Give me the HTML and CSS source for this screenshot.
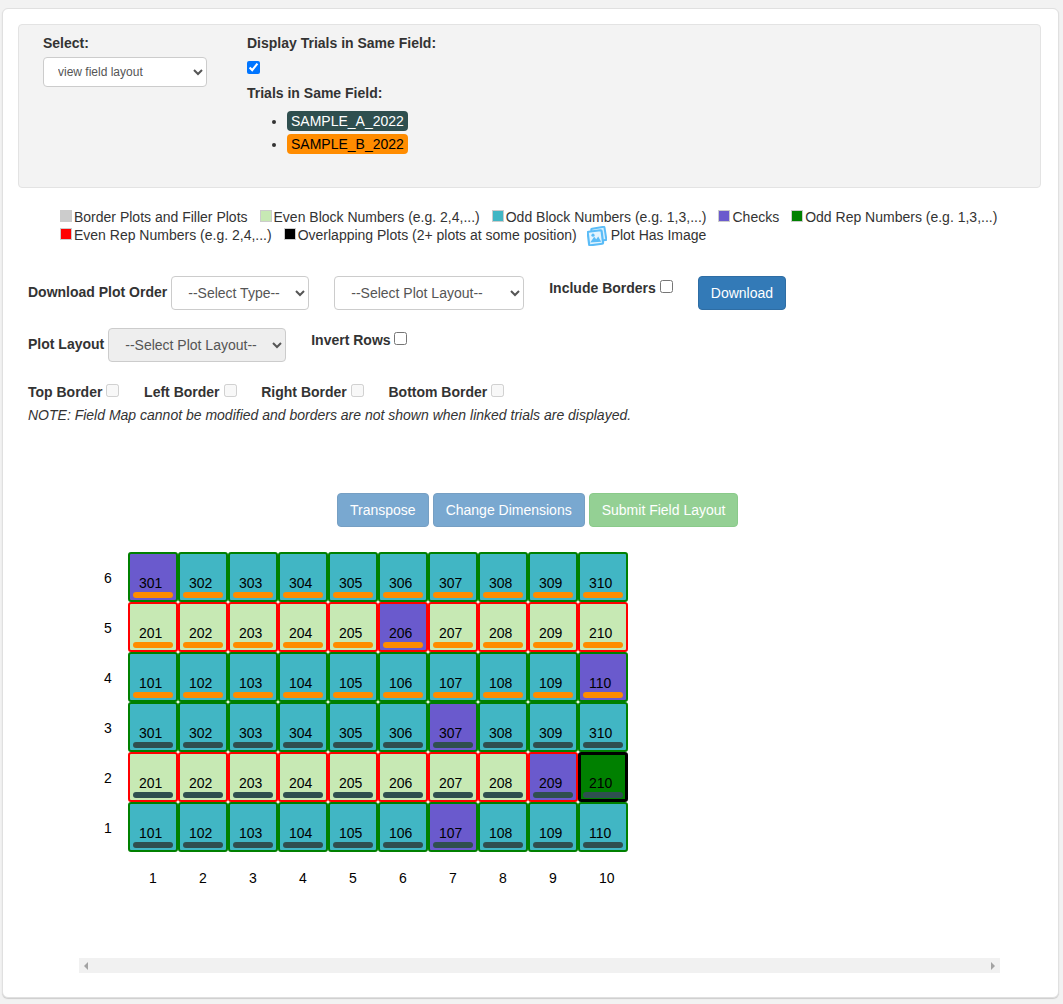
FILE: index.html
```html
<!DOCTYPE html>
<html lang="en">
<head>
    <meta charset="UTF-8">
    <title>Field Layout</title>
    <link rel="stylesheet" href="styles.css">
</head>
<body>
    <div class="card">
        <div class="well">
            <div class="well-select">
                <label class="label">Select:</label>
                <select class="small-select">
                    <option>view field layout</option>
                </select>
            </div>
            <div class="well-linked">
                <label class="label">Display Trials in Same Field:</label>
                <input type="checkbox" class="linked-check" checked>
                <label class="label">Trials in Same Field:</label>
                <ul class="trial-list">
                    <li><span class="trial-tag tag-a">SAMPLE_A_2022</span></li>
                    <li><span class="trial-tag tag-b">SAMPLE_B_2022</span></li>
                </ul>
            </div>
        </div>

        <div class="legend">
            <span class="legend-item"><i class="swatch sw-border"></i>Border Plots and Filler Plots</span>
            <span class="legend-item"><i class="swatch sw-even"></i>Even Block Numbers (e.g. 2,4,...)</span>
            <span class="legend-item"><i class="swatch sw-odd"></i>Odd Block Numbers (e.g. 1,3,...)</span>
            <span class="legend-item"><i class="swatch sw-check"></i>Checks</span>
            <span class="legend-item"><i class="swatch sw-oddrep"></i>Odd Rep Numbers (e.g. 1,3,...)</span>
            <span class="legend-item"><i class="swatch sw-evenrep"></i>Even Rep Numbers (e.g. 2,4,...)</span>
            <span class="legend-item"><i class="swatch sw-overlap"></i>Overlapping Plots (2+ plots at some position)</span>
            <span class="legend-item legend-image">
                <svg class="image-icon" viewBox="0 0 20 20" width="20" height="20">
                    <rect x="5" y="1.8" width="13.4" height="13.4" rx="1" fill="#d9f0fe" stroke="#5bbcf7" stroke-width="2" transform="rotate(-9 11 8)"/>
                    <rect x="1.4" y="5" width="14" height="13.6" rx="1" fill="#e3f4fe" stroke="#5bbcf7" stroke-width="2.2" transform="rotate(-7 8 12)"/>
                    <circle cx="6" cy="9.2" r="1.6" fill="#5bbcf7"/>
                    <path d="M3.2 16.6 7.2 10.8l2 2.4 2-2.8 3 5.4z" fill="#5bbcf7"/>
                </svg>
                Plot Has Image
            </span>
        </div>

        <div class="control-row first-row">
            <div class="field">
                <label class="label label-mid">Download Plot Order</label>
                <select class="form-select"><option>--Select Type--</option></select>
            </div>
            <select class="form-select layout-select"><option>--Select Plot Layout--</option></select>
            <div class="field field-high">
                <label class="label">Include Borders</label>
                <input type="checkbox" class="check">
            </div>
            <button class="btn btn-blue">Download</button>
        </div>

        <div class="control-row second-row">
            <div class="field">
                <label class="label label-mid">Plot Layout</label>
                <select class="form-select" disabled><option>--Select Plot Layout--</option></select>
            </div>
            <div class="field field-high invert-field">
                <label class="label">Invert Rows</label>
                <input type="checkbox" class="check">
            </div>
        </div>

        <div class="control-row border-row">
            <div class="field"><label class="label">Top Border</label><input type="checkbox" class="check" disabled></div>
            <div class="field"><label class="label">Left Border</label><input type="checkbox" class="check" disabled></div>
            <div class="field"><label class="label">Right Border</label><input type="checkbox" class="check" disabled></div>
            <div class="field"><label class="label">Bottom Border</label><input type="checkbox" class="check" disabled></div>
        </div>
        <p class="note">NOTE: Field Map cannot be modified and borders are not shown when linked trials are displayed.</p>

        <div class="layout-actions">
            <button class="btn btn-blue faded">Transpose</button>
            <button class="btn btn-blue faded">Change Dimensions</button>
            <button class="btn btn-green faded">Submit Field Layout</button>
        </div>

        <div class="field-map">
            <span class="row-label">6</span>
            <div class="plot rep-odd purple"><span>301</span><b class="bar bar-b"></b></div>
            <div class="plot rep-odd teal"><span>302</span><b class="bar bar-b"></b></div>
            <div class="plot rep-odd teal"><span>303</span><b class="bar bar-b"></b></div>
            <div class="plot rep-odd teal"><span>304</span><b class="bar bar-b"></b></div>
            <div class="plot rep-odd teal"><span>305</span><b class="bar bar-b"></b></div>
            <div class="plot rep-odd teal"><span>306</span><b class="bar bar-b"></b></div>
            <div class="plot rep-odd teal"><span>307</span><b class="bar bar-b"></b></div>
            <div class="plot rep-odd teal"><span>308</span><b class="bar bar-b"></b></div>
            <div class="plot rep-odd teal"><span>309</span><b class="bar bar-b"></b></div>
            <div class="plot rep-odd teal"><span>310</span><b class="bar bar-b"></b></div>

            <span class="row-label">5</span>
            <div class="plot rep-even pale"><span>201</span><b class="bar bar-b"></b></div>
            <div class="plot rep-even pale"><span>202</span><b class="bar bar-b"></b></div>
            <div class="plot rep-even pale"><span>203</span><b class="bar bar-b"></b></div>
            <div class="plot rep-even pale"><span>204</span><b class="bar bar-b"></b></div>
            <div class="plot rep-even pale"><span>205</span><b class="bar bar-b"></b></div>
            <div class="plot rep-even purple"><span>206</span><b class="bar bar-b"></b></div>
            <div class="plot rep-even pale"><span>207</span><b class="bar bar-b"></b></div>
            <div class="plot rep-even pale"><span>208</span><b class="bar bar-b"></b></div>
            <div class="plot rep-even pale"><span>209</span><b class="bar bar-b"></b></div>
            <div class="plot rep-even pale"><span>210</span><b class="bar bar-b"></b></div>

            <span class="row-label">4</span>
            <div class="plot rep-odd teal"><span>101</span><b class="bar bar-b"></b></div>
            <div class="plot rep-odd teal"><span>102</span><b class="bar bar-b"></b></div>
            <div class="plot rep-odd teal"><span>103</span><b class="bar bar-b"></b></div>
            <div class="plot rep-odd teal"><span>104</span><b class="bar bar-b"></b></div>
            <div class="plot rep-odd teal"><span>105</span><b class="bar bar-b"></b></div>
            <div class="plot rep-odd teal"><span>106</span><b class="bar bar-b"></b></div>
            <div class="plot rep-odd teal"><span>107</span><b class="bar bar-b"></b></div>
            <div class="plot rep-odd teal"><span>108</span><b class="bar bar-b"></b></div>
            <div class="plot rep-odd teal"><span>109</span><b class="bar bar-b"></b></div>
            <div class="plot rep-odd purple"><span>110</span><b class="bar bar-b"></b></div>

            <span class="row-label">3</span>
            <div class="plot rep-odd teal"><span>301</span><b class="bar bar-a"></b></div>
            <div class="plot rep-odd teal"><span>302</span><b class="bar bar-a"></b></div>
            <div class="plot rep-odd teal"><span>303</span><b class="bar bar-a"></b></div>
            <div class="plot rep-odd teal"><span>304</span><b class="bar bar-a"></b></div>
            <div class="plot rep-odd teal"><span>305</span><b class="bar bar-a"></b></div>
            <div class="plot rep-odd teal"><span>306</span><b class="bar bar-a"></b></div>
            <div class="plot rep-odd purple"><span>307</span><b class="bar bar-a"></b></div>
            <div class="plot rep-odd teal"><span>308</span><b class="bar bar-a"></b></div>
            <div class="plot rep-odd teal"><span>309</span><b class="bar bar-a"></b></div>
            <div class="plot rep-odd teal"><span>310</span><b class="bar bar-a"></b></div>

            <span class="row-label">2</span>
            <div class="plot rep-even pale"><span>201</span><b class="bar bar-a"></b></div>
            <div class="plot rep-even pale"><span>202</span><b class="bar bar-a"></b></div>
            <div class="plot rep-even pale"><span>203</span><b class="bar bar-a"></b></div>
            <div class="plot rep-even pale"><span>204</span><b class="bar bar-a"></b></div>
            <div class="plot rep-even pale"><span>205</span><b class="bar bar-a"></b></div>
            <div class="plot rep-even pale"><span>206</span><b class="bar bar-a"></b></div>
            <div class="plot rep-even pale"><span>207</span><b class="bar bar-a"></b></div>
            <div class="plot rep-even pale"><span>208</span><b class="bar bar-a"></b></div>
            <div class="plot rep-even purple"><span>209</span><b class="bar bar-a"></b></div>
            <div class="plot overlap"><span>210</span><b class="bar bar-a"></b></div>

            <span class="row-label">1</span>
            <div class="plot rep-odd teal"><span>101</span><b class="bar bar-a"></b></div>
            <div class="plot rep-odd teal"><span>102</span><b class="bar bar-a"></b></div>
            <div class="plot rep-odd teal"><span>103</span><b class="bar bar-a"></b></div>
            <div class="plot rep-odd teal"><span>104</span><b class="bar bar-a"></b></div>
            <div class="plot rep-odd teal"><span>105</span><b class="bar bar-a"></b></div>
            <div class="plot rep-odd teal"><span>106</span><b class="bar bar-a"></b></div>
            <div class="plot rep-odd purple"><span>107</span><b class="bar bar-a"></b></div>
            <div class="plot rep-odd teal"><span>108</span><b class="bar bar-a"></b></div>
            <div class="plot rep-odd teal"><span>109</span><b class="bar bar-a"></b></div>
            <div class="plot rep-odd teal"><span>110</span><b class="bar bar-a"></b></div>

            <span></span>
            <span class="col-label">1</span>
            <span class="col-label">2</span>
            <span class="col-label">3</span>
            <span class="col-label">4</span>
            <span class="col-label">5</span>
            <span class="col-label">6</span>
            <span class="col-label">7</span>
            <span class="col-label">8</span>
            <span class="col-label">9</span>
            <span class="col-label">10</span>
        </div>

        <div class="scroll-track">
            <i class="arrow arrow-left"></i>
            <i class="arrow arrow-right"></i>
        </div>
    </div>
</body>
</html>
```

FILE: styles.css
```css
* {
    box-sizing: border-box;
}
body {
    margin: 0;
    background-color: #f2f2f2;
    font-family: "Liberation Sans", Arial, sans-serif;
    font-size: 14px;
    line-height: 20px;
    color: #333;
}
.card {
    margin: 8px 4px 6px 2px;
    height: 990px;
    padding: 15px 15px 0;
    background-color: #fff;
    border: 1px solid #e0e0e0;
    border-radius: 6px;
    box-shadow: 0 1px 1px #ccc;
}
.well {
    display: flex;
    height: 164px;
    margin-right: 2px;
    padding: 8px 24px;
    background-color: #f3f3f3;
    border: 1px solid #e3e3e3;
    border-radius: 4px;
}
.well-select {
    width: 204px;
}
.well-linked {
    display: flex;
    flex-direction: column;
    align-items: flex-start;
}
.label {
    display: block;
    font-weight: bold;
}
.small-select {
    display: block;
    width: 164px;
    height: 30px;
    margin-top: 4px;
    padding: 5px 10px;
    font-family: inherit;
    font-size: 12px;
    color: #555;
    background-color: #fff;
    border: 1px solid #ccc;
    border-radius: 4px;
}
.linked-check {
    width: 13px;
    height: 13px;
    margin: 8px 0 9px;
}
.trial-list {
    margin: 8px 0 0;
    padding-left: 40px;
}
.trial-list li {
    height: 23px;
}
.trial-tag {
    display: inline-block;
    padding: 0 4px;
    border-radius: 4px;
}
.tag-a {
    background-color: #2f4f4f;
    color: #fff;
}
.tag-b {
    background-color: #ff8c00;
    color: #000;
}
.legend {
    display: flex;
    flex-wrap: wrap;
    column-gap: 12px;
    margin: 20px 30px 0 42px;
    line-height: 18px;
}
.legend-item {
    display: flex;
    align-items: center;
    white-space: nowrap;
}
.swatch {
    width: 12px;
    height: 12px;
    margin-right: 2px;
    margin-top: -2px;
    border: 1px solid #ccc;
}
.sw-border { background-color: #ccc; }
.sw-even { background-color: #c7e9b4; }
.sw-odd { background-color: #41b6c4; }
.sw-check { background-color: #6a5acd; }
.sw-oddrep { background-color: #008000; }
.sw-evenrep { background-color: #f00; }
.sw-overlap { background-color: #000; }
.legend-image {
    height: 18px;
    margin-left: -2px;
}
.image-icon {
    margin-right: 4px;
    margin-top: 2px;
}
.control-row {
    display: flex;
    align-items: flex-start;
    column-gap: 25px;
    padding-left: 10px;
}
.first-row {
    margin-top: 32px;
}
.second-row {
    margin-top: 18px;
}
.border-row {
    margin-top: 20px;
    column-gap: 24.7px;
}
.field {
    display: flex;
    align-items: flex-start;
    column-gap: 4px;
}
.label-mid {
    margin-top: 6px;
}
.field-high {
    margin-top: 2px;
}
.invert-field {
    column-gap: 3.6px;
}
.check {
    width: 13px;
    height: 13px;
    margin: 2px 0 0;
}
.form-select {
    height: 34px;
    padding: 6px 12px;
    font-family: inherit;
    font-size: 14px;
    color: #555;
    background-color: #fff;
    border: 1px solid #ccc;
    border-radius: 4px;
}
.layout-select {
    width: 190px;
}
.form-select:disabled {
    background-color: #eee;
    opacity: 1;
}
.btn {
    height: 34px;
    padding: 6px 12px;
    font-family: inherit;
    font-size: 14px;
    line-height: 20px;
    color: #fff;
    border: 1px solid transparent;
    border-radius: 4px;
}
.btn-blue {
    background-color: #337ab7;
    border-color: #2e6da4;
}
.btn-green {
    background-color: #5cb85c;
    border-color: #4cae4c;
}
.faded {
    opacity: 0.65;
}
.note {
    margin: 3px 0 0;
    padding-left: 10px;
    font-style: italic;
}
.layout-actions {
    display: flex;
    column-gap: 4px;
    margin-top: 68px;
    padding-left: 319px;
}
.field-map {
    display: grid;
    grid-template-columns: 24px repeat(10, 50px);
    grid-auto-rows: 50px;
    margin: 25px 0 0 86px;
}
.row-label {
    padding-top: 16px;
    color: #000;
}
.col-label {
    padding: 16px 0 0 21px;
    color: #000;
}
.plot {
    display: flex;
    flex-direction: column;
    justify-content: flex-end;
    padding: 0 3px 2px;
    border: 2px solid;
    border-radius: 3px;
    color: #000;
    line-height: 16px;
}
.plot span {
    padding-left: 6px;
    margin-bottom: 1px;
}
.rep-odd { border-color: #008000; }
.rep-even { border-color: #f00; }
.teal { background-color: #41b6c4; }
.pale { background-color: #c7e9b4; }
.purple { background-color: #6a5acd; }
.overlap {
    padding: 0 2px 1px;
    background-color: #008000;
    border: 3px solid #000;
}
.bar {
    height: 6px;
    border-radius: 3px;
}
.bar-a { background-color: #2f4f4f; }
.bar-b { background-color: #ff8c00; }
.scroll-track {
    display: flex;
    justify-content: space-between;
    align-items: center;
    width: 921px;
    height: 15px;
    margin: 56px 0 0 61px;
    padding: 0 5px;
    background-color: #f1f1f1;
}
.arrow {
    width: 0;
    height: 0;
    border-top: 4px solid transparent;
    border-bottom: 4px solid transparent;
}
.arrow-left { border-right: 4px solid #a3a3a3; }
.arrow-right { border-left: 4px solid #a3a3a3; }
```
